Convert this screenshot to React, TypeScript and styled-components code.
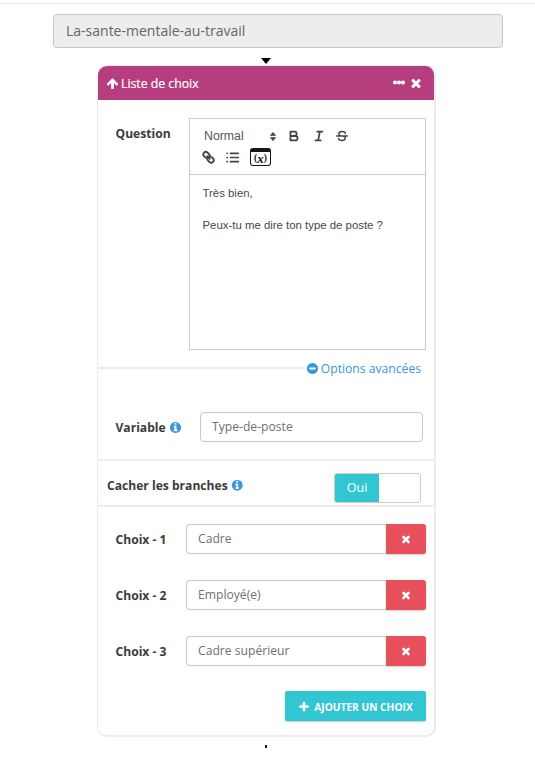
import React from 'react';
import styled, { createGlobalStyle } from 'styled-components';

const GlobalStyle = createGlobalStyle`
  *, *::before, *::after { box-sizing: border-box; }
  html, body { margin: 0; background: #fff; }
  body {
    font-family: 'Open Sans', 'Noto Sans', sans-serif;
    font-size: 13px;
    color: #3c3c3c;
  }
`;

const Page = styled.main`
  width: 535px;
  height: 771px;
  padding-top: 3px;
  overflow: hidden;
`;

const Canvas = styled.div`
  display: flex;
  flex-direction: column;
  border-top: 1px solid #e9e9e9;
  padding-top: 10px;
`;

const FlowName = styled.div`
  width: 450px;
  height: 34px;
  margin-left: 53px;
  padding-left: 12px;
  border: 1px solid #c6c6c6;
  border-radius: 4px;
  background: #ededed;
  color: #666;
  font-size: 14px;
  line-height: 32px;
`;

const ArrowHead = styled.div`
  width: 0;
  margin: 10px 0 1px 261px;
  border: 5.5px solid transparent;
  border-top: 6px solid #000;
  border-bottom: 0;
`;

const Connector = styled.div`
  width: 2px;
  height: 3px;
  margin: 8px 0 0 265px;
  background: #111;
`;

const Card = styled.section`
  width: 339px;
  height: 672px;
  margin-left: 97px;
  border: 2px solid #ececec;
  border-width: 1px 2px 2px 1px;
  border-radius: 10px;
  overflow: hidden;
`;

const CardHeader = styled.header`
  display: flex;
  align-items: center;
  height: 34px;
  padding: 0 11px 0 8px;
  background: #b63e7e;
  color: #fff;
  -webkit-text-stroke: 0.2px #fff;
`;

const Title = styled.span`
  flex: 1;
  margin-left: 2px;
  font-size: 12.25px;
`;

const HeaderActions = styled.div`
  display: flex;
  align-items: center;
  gap: 3px;
`;

const Label = styled.label<{ $width: number }>`
  display: flex;
  align-items: center;
  gap: 3px;
  flex: none;
  width: ${p => p.$width}px;
  height: 30px;
  font-size: 12.1px;
  font-weight: 700;
  white-space: nowrap;
`;

const QuestionRow = styled.div`
  display: flex;
  padding: 18px 0 0 17.5px;
`;

const Editor = styled.div`
  width: 237px;
  height: 232px;
  border: 1px solid #ccc;
  font-family: 'Liberation Sans', Arial, sans-serif;
`;

const Toolbar = styled.div`
  height: 56px;
  padding: 6.5px 0 0 10px;
  border-bottom: 1px solid #ccc;
  color: #444;
`;

const ToolLine = styled.div`
  display: flex;
  align-items: center;
  height: 21px;
`;

const FormatPicker = styled.div`
  display: flex;
  align-items: center;
  justify-content: space-between;
  width: 80px;
  padding: 0 4px;
  color: #555;
  font-size: 12.3px;
`;

const Tool = styled.span<{ $width?: number }>`
  display: flex;
  justify-content: center;
  width: ${p => p.$width ?? 24.5}px;
`;

const VariableIcon = styled.span`
  display: flex;
  align-items: center;
  justify-content: center;
  width: 21px;
  height: 18px;
  border: 1.5px solid #15151b;
  border-top-width: 4px;
  border-radius: 3px;
  color: #111;
  font: 700 9.5px/11px 'Liberation Serif', serif;

  i { font-size: 13px; }
`;

const Message = styled.div`
  padding: 10px 12.5px;
  color: #484848;
  font-size: 11.4px;
  line-height: 16px;

  p { margin: 0 0 16px; white-space: nowrap; }
`;

const Advanced = styled.div`
  display: flex;
  align-items: center;
  height: 20px;
  margin-top: 8px;
  margin-bottom: 1px;
  padding-right: 13px;
  color: #3498db;
  font-size: 12.15px;
  white-space: nowrap;

  &::before {
    content: '';
    flex: 1;
    height: 2px;
    margin: -1px 2px 0 0;
    background: #ededed;
  }
  span { margin-left: 2px; }
`;

const VariableRow = styled.div`
  display: flex;
  height: 82px;
  padding: 33px 0 0 17.5px;
  border-bottom: 2px solid #ededed;
`;

const Field = styled.div<{ $width: number; $joined?: boolean }>`
  width: ${p => p.$width}px;
  height: 30px;
  padding-left: 11px;
  border: 1px solid #c8c8c8;
  border-radius: ${p => (p.$joined ? '4px 0 0 4px' : '4px')};
  border-right-width: ${p => (p.$joined ? 0 : 1)}px;
  color: #707070;
  font-size: 12.15px;
  line-height: 28px;
`;

const BranchRow = styled.div`
  display: flex;
  justify-content: space-between;
  height: 46px;
  padding: 12px 13px 0 9px;
  border-bottom: 2px solid #ededed;

  label { height: 24px; }
`;

const Toggle = styled.div`
  width: 87px;
  height: 30px;
  border: 1px solid #ccc;
  border-radius: 3px;
  overflow: hidden;
`;

const ToggleOn = styled.div`
  width: 44px;
  height: 28px;
  background: #32c5d2;
  color: #fff;
  font-size: 12.6px;
  line-height: 28px;
  text-align: center;
`;

const Choices = styled.div`
  display: grid;
  gap: 26px;
  padding: 17px 0 0 17.5px;
`;

const ChoiceRow = styled.div`
  display: flex;
`;

const RemoveButton = styled.button`
  display: flex;
  align-items: center;
  justify-content: center;
  width: 40px;
  height: 30px;
  padding: 0;
  border: 0;
  border-radius: 0 3px 3px 0;
  background: #e7505a;
  color: #fff;
  box-shadow: 0 1px 2px rgba(0, 0, 0, 0.2);
`;

const AddButton = styled.button`
  display: flex;
  align-items: center;
  justify-content: center;
  gap: 4px;
  width: 141px;
  height: 30px;
  margin: 25px 0 0 187px;
  padding: 1px 0 0;
  border: 0;
  border-radius: 2px;
  background: #32c5d2;
  color: #fff;
  font: 700 10.2px 'Open Sans', sans-serif;
  white-space: nowrap;
  box-shadow: 0 1px 2px rgba(0, 0, 0, 0.22);
`;

const GLYPHS = {
  times:
    'M1490 1322q0 40-28 68l-136 136q-28 28-68 28t-68-28l-294-294-294 294q-28 28-68 28t-68-28l-136-136q-28-28-28-68t28-68l294-294-294-294q-28-28-28-68t28-68l136-136q28-28 68-28t68 28l294 294 294-294q28-28 68-28t68 28l136 136q28 28 28 68t-28 68l-294 294 294 294q28 28 28 68z',
  plus:
    'M1600 736v192q0 40-28 68t-68 28h-416v416q0 40-28 68t-68 28h-192q-40 0-68-28t-28-68v-416h-416q-40 0-68-28t-28-68v-192q0-40 28-68t68-28h416v-416q0-40 28-68t68-28h192q40 0 68 28t28 68v416h416q40 0 68 28t28 68z',
  arrowUp:
    'M1675 971q0 51-37 90l-75 75q-38 38-91 38-54 0-90-38l-294-293v704q0 52-37.500 84.500t-90.500 32.500h-128q-53 0-90.500-32.500t-37.500-84.500v-704l-294 293q-36 38-90 38t-90-38l-75-75q-38-38-38-90 0-53 38-91l651-651q35-37 90-37 54 0 91 37l651 651q37 39 37 91z',
  more:
    'M576 736v192q0 40-28 68t-68 28h-192q-40 0-68-28t-28-68v-192q0-40 28-68t68-28h192q40 0 68 28t28 68zm512 0v192q0 40-28 68t-68 28h-192q-40 0-68-28t-28-68v-192q0-40 28-68t68-28h192q40 0 68 28t28 68zm512 0v192q0 40-28 68t-68 28h-192q-40 0-68-28t-28-68v-192q0-40 28-68t68-28h192q40 0 68 28t28 68z',
  info:
    'M1152 1376v-160q0-14-9-23t-23-9h-96v-512q0-14-9-23t-23-9h-320q-14 0-23 9t-9 23v160q0 14 9 23t23 9h96v320h-96q-14 0-23 9t-9 23v160q0 14 9 23t23 9h448q14 0 23-9t9-23zm-128-896v-160q0-14-9-23t-23-9h-192q-14 0-23 9t-9 23v160q0 14 9 23t23 9h192q14 0 23-9t9-23zm640 416q0 209-103 385.500t-279.500 279.500-385.500 103-385.500-103-279.500-279.500-103-385.500 103-385.500 279.500-279.500 385.500-103 385.500 103 279.500 279.500 103 385.500z',
  minus:
    'M1344 960v-128q0-26-19-45t-45-19h-768q-26 0-45 19t-19 45v128q0 26 19 45t45 19h768q26 0 45-19t19-45zm320-64q0 209-103 385.500t-279.500 279.500-385.500 103-385.500-103-279.500-279.500-103-385.500 103-385.500 279.500-279.500 385.500-103 385.500 103 279.500 279.500 103 385.500z',
};

function Glyph({ name, size = 13, color = 'currentColor', outline = 0 }: { name: keyof typeof GLYPHS; size?: number; color?: string; outline?: number }) {
  return (
    <svg width={size} height={size} viewBox="0 0 1792 1792" fill={color} stroke={color} strokeWidth={outline} aria-hidden="true">
      <path d={GLYPHS[name]} />
    </svg>
  );
}

function Stroke({ size = 16, width = 2, children }: { size?: number; width?: number; children: React.ReactNode }) {
  return (
    <svg width={size} height={size} viewBox="0 0 18 18" fill="none" stroke="#444" strokeWidth={width} strokeLinecap="round" strokeLinejoin="round" aria-hidden="true">
      {children}
    </svg>
  );
}

const choices = ['Cadre', 'Employé(e)', 'Cadre supérieur'];

export default function App() {
  return (
    <>
      <GlobalStyle />
      <Page>
        <Canvas>
          <FlowName>La-sante-mentale-au-travail</FlowName>
          <ArrowHead />
          <Card>
            <CardHeader>
              <Glyph name="arrowUp" />
              <Title>Liste de choix</Title>
              <HeaderActions>
                <Glyph name="more" size={14} outline={100} />
                <Glyph name="times" size={14} />
              </HeaderActions>
            </CardHeader>
            <QuestionRow>
              <Label $width={73.5}>Question</Label>
              <Editor>
                <Toolbar>
                  <ToolLine>
                    <FormatPicker>
                      Normal
                      <svg width="6" height="9" viewBox="0 0 6 9" fill="#444" stroke="#444" strokeWidth="0.6">
                        <path d="M3 .3 5.700 3.500H.3zM.3 5.500h5.400L3 8.700z" />
                      </svg>
                    </FormatPicker>
                    <Tool $width={28}>
                      <Stroke>
                        <path d="M5 4h4.500a2.500 2.500 0 0 1 0 5H5zM5 9h5.500a2.500 2.500 0 0 1 0 5H5z" />
                      </Stroke>
                    </Tool>
                    <Tool $width={22}>
                      <Stroke>
                        <path d="M7 4h6M5 14h6M8 14l2-10" />
                      </Stroke>
                    </Tool>
                    <Tool>
                      <Stroke width={1.6}>
                        <path d="M3 9h12M12.800 6.200C12.600 3.200 5.400 3.200 5.400 6.400 5.400 7.900 6.700 8.700 8 9M10 9c1.500.3 2.700 1.100 2.700 2.600 0 3.200-7.300 3.200-7.500.2" />
                      </Stroke>
                    </Tool>
                  </ToolLine>
                  <ToolLine>
                    <Tool $width={17}>
                      <Stroke size={15} width={2.2}>
                        <rect x="2.500" y="3" width="8" height="6" rx="3" transform="rotate(42 6.500 6)" />
                        <rect x="7.500" y="8.500" width="8" height="6" rx="3" transform="rotate(42 11.500 11.500)" />
                        <path d="m7.500 7.500 3 3" />
                      </Stroke>
                    </Tool>
                    <Tool $width={31}>
                      <Stroke size={15}>
                        <path d="M6.500 4H16M6.500 9H16M6.500 14H16M2.500 4h.2M2.500 9h.2M2.500 14h.2" />
                      </Stroke>
                    </Tool>
                    <Tool $width={25}>
                      <VariableIcon>
                        (<i>x</i>)
                      </VariableIcon>
                    </Tool>
                  </ToolLine>
                </Toolbar>
                <Message>
                  <p>Très bien,</p>
                  <p>Peux-tu me dire ton type de poste ?</p>
                </Message>
              </Editor>
            </QuestionRow>
            <Advanced>
              <Glyph name="minus" />
              <span>Options avancées</span>
            </Advanced>
            <VariableRow>
              <Label $width={84.5}>
                Variable <Glyph name="info" color="#3598dc" />
              </Label>
              <Field $width={223}>Type-de-poste</Field>
            </VariableRow>
            <BranchRow>
              <Label $width={140}>
                Cacher les branches <Glyph name="info" size={12.5} color="#3598dc" />
              </Label>
              <Toggle>
                <ToggleOn>Oui</ToggleOn>
              </Toggle>
            </BranchRow>
            <Choices>
              {choices.map((choice, index) => (
                <ChoiceRow key={choice}>
                  <Label $width={70.5}>Choix - {index + 1}</Label>
                  <Field $width={200} $joined>{choice}</Field>
                  <RemoveButton aria-label="Supprimer">
                    <Glyph name="times" size={12} />
                  </RemoveButton>
                </ChoiceRow>
              ))}
            </Choices>
            <AddButton>
              <Glyph name="plus" size={12} />
              AJOUTER UN CHOIX
            </AddButton>
          </Card>
          <Connector />
        </Canvas>
      </Page>
    </>
  );
}
